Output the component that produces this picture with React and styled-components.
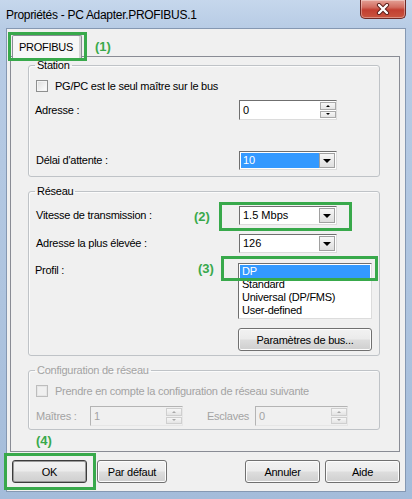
import React from 'react';
import styled, { createGlobalStyle } from 'styled-components';

// Global page setup
const GlobalStyle = createGlobalStyle`
  html, body { margin: 0; padding: 0; }
  body {
    background: #b9cce4;
    font-family: "Liberation Sans", Arial, sans-serif;
    font-size: 11px;
  }
  * { box-sizing: border-box; }
`;

const GREEN = '#38a94b';

// Window chrome
const Window = styled.div`
  position: relative;
  width: 412px;
  height: 499px;
  display: flex;
  flex-direction: column;
  overflow: hidden;
  background: linear-gradient(180deg, #c6d7ec 0px, #b8cce5 28px, #aec4df 300px, #a4bcda 100%);
`;

const TitleBar = styled.div`
  height: 28px;
  flex: none;
  display: flex;
  align-items: flex-start;
  padding: 0 6px 0 6px;
`;

const Title = styled.div`
  flex: 1;
  margin-top: 8px;
  font-size: 12px;
  line-height: 14px;
  letter-spacing: -0.3px;
  color: #000;
`;

const CloseButton = styled.div`
  width: 46px;
  height: 19px;
  display: flex;
  align-items: center;
  justify-content: center;
  border: 1px solid #6e2a26;
  border-top: none;
  border-radius: 0 0 5px 5px;
  background: linear-gradient(180deg, #e4a196 0%, #d26d60 40%, #c23f31 55%, #c9553f 100%);
  box-shadow: inset 0 0 0 1px rgba(255, 255, 255, 0.35);
`;

const Client = styled.div`
  flex: 1;
  margin: 0 6px 7px;
  border: 1px solid #8598b2;
  background: #f0f0f0;
  display: flex;
  flex-direction: column;
  padding: 6px 5px 0 3px;
`;

// Tabs
const TabStrip = styled.div`
  display: flex;
  height: 22px;
  padding-left: 2px;
  position: relative;
  z-index: 1;
  margin-bottom: -1px;
`;

const Tab = styled.div`
  width: 70px;
  height: 23px;
  border: 1px solid #898c95;
  border-bottom: none;
  border-radius: 2px 2px 0 0;
  background: #f7f7f7;
  box-shadow: inset -2px 0 0 #d4d4d4;
  display: flex;
  align-items: center;
  justify-content: center;
  padding-right: 2px;
  padding-bottom: 1px;
  color: #000;
  letter-spacing: -0.25px;
`;

const TabPanel = styled.div`
  border: 1px solid #898c95;
  background: #f0f0f0;
  padding: 2px 19px 21px 17px;
`;

// Group boxes
const Group = styled.fieldset`
  margin: ${p => p.$mt}px 0 0;
  padding: 0 6px ${p => p.$pb}px 6px;
  border: 1px solid #bfc3c7;
  border-radius: 3px;
  box-shadow: inset 1px 1px 0 #fbfbfb;
  min-width: 0;
  color: ${p => (p.$disabled ? '#a3a3a3' : '#000')};
`;

const Legend = styled.legend`
  padding: 0 2px;
  font-size: 11px;
  line-height: 13px;
  letter-spacing: -0.25px;
`;

const Row = styled.div`
  display: flex;
  align-items: ${p => (p.$top ? 'flex-start' : 'center')};
  height: ${p => p.$h}px;
  margin-top: ${p => p.$mt}px;
`;

const Label = styled.span`
  width: ${p => p.$w || 204}px;
  flex: none;
  padding-left: ${p => p.$indent || 0}px;
  padding-top: ${p => p.$pt || 0}px;
  line-height: 13px;
  letter-spacing: -0.25px;
  white-space: nowrap;
`;

const Check = styled.span`
  width: 12px;
  height: 12px;
  flex: none;
  margin: 0 7px 0 1px;
  border: 1px solid ${p => (p.$disabled ? '#bdbdbd' : '#8e8f8f')};
  background: ${p => (p.$disabled
    ? '#f0f0f0'
    : 'linear-gradient(135deg, #dcdcdc 0%, #f6f6f6 70%, #ffffff 100%)')};
  box-shadow: inset 0 0 0 1px ${p => (p.$disabled ? '#e6e6e6' : '#f4f4f4')};
`;

const CheckText = styled.span`
  line-height: 13px;
  letter-spacing: -0.25px;
  white-space: nowrap;
`;

// Text-like controls
const Spin = styled.div`
  width: ${p => p.$w}px;
  height: 20px;
  flex: none;
  display: flex;
  border: 1px solid;
  border-color: ${p => (p.$disabled ? '#b4b4b4 #e6e6e6 #e6e6e6 #b4b4b4' : '#6f6f6f #dcdcdc #dcdcdc #6f6f6f')};
  background: ${p => (p.$disabled ? '#f0f0f0' : '#fff')};
  padding: 1px 0 1px 1px;
`;

const SpinValue = styled.span`
  flex: 1;
  padding-left: 2px;
  line-height: 16px;
  color: ${p => (p.$disabled ? '#a3a3a3' : '#000')};
`;

const SpinButtons = styled.div`
  width: 16px;
  display: flex;
  flex-direction: column;
  gap: 1px;
`;

const SpinArrow = styled.div`
  flex: 1;
  display: flex;
  align-items: center;
  justify-content: center;
  border: 1px solid ${p => (p.$disabled ? '#cfcfcf' : '#a9a9a9')};
  background: linear-gradient(180deg, #f7f7f7, #e4e4e4);
  &::after {
    content: '';
    border-left: 2px solid transparent;
    border-right: 2px solid transparent;
    ${p => (p.$down ? 'border-top' : 'border-bottom')}: 2px solid ${p => (p.$disabled ? '#a8a8a8' : '#000')};
  }
`;

const Combo = styled.div`
  width: 98px;
  height: 19px;
  flex: none;
  display: flex;
  border: 1px solid;
  border-color: #6f6f6f #dcdcdc #dcdcdc #6f6f6f;
  background: #fff;
  padding: 1px;
`;

const ComboValue = styled.span`
  flex: 1;
  padding-left: 2px;
  line-height: 15px;
  background: ${p => (p.$selected ? '#3399ff' : 'transparent')};
  color: ${p => (p.$selected ? '#fff' : '#000')};
`;

const ComboButton = styled.div`
  width: 16px;
  display: flex;
  align-items: center;
  justify-content: center;
  border: 1px solid #a0a0a0;
  background: linear-gradient(180deg, #f7f7f7, #dedede);
  &::after {
    content: '';
    border-left: 4px solid transparent;
    border-right: 4px solid transparent;
    border-top: 4px solid #000;
    margin-top: 1px;
  }
`;

const ListBox = styled.div`
  width: 134px;
  height: 56px;
  flex: none;
  margin-left: -1px;
  border: 1px solid;
  border-color: #6f6f6f #dcdcdc #dcdcdc #6f6f6f;
  background: #fff;
  padding: 1px 1px 0;
`;

const ListItem = styled.div`
  height: 13px;
  line-height: 13px;
  padding-left: 2px;
  letter-spacing: -0.25px;
  background: ${p => (p.$selected ? '#3399ff' : 'transparent')};
  color: ${p => (p.$selected ? '#fff' : '#000')};
`;

// Push buttons
const Button = styled.div`
  width: ${p => p.$w}px;
  height: 23px;
  flex: none;
  margin-left: ${p => p.$ml || 0}px;
  display: flex;
  align-items: center;
  justify-content: center;
  border: 1px solid ${p => (p.$default ? '#3c3c3c' : '#707070')};
  border-radius: 3px;
  background: linear-gradient(180deg, #f2f2f2 0%, #ebebeb 48%, #dddddd 52%, #cfcfcf 100%);
  box-shadow: inset 0 0 0 1px ${p => (p.$default ? '#9a9a9a' : '#fcfcfc')};
  color: #000;
  letter-spacing: -0.25px;
`;

const ButtonRow = styled.div`
  display: flex;
  margin-top: 8px;
  padding-left: 2px;
`;

const Spacer = styled.div`
  flex: 1;
`;

// Annotation overlays
const Marker = styled.div`
  position: absolute;
  left: ${p => p.$x}px;
  top: ${p => p.$y}px;
  width: ${p => p.$w}px;
  height: ${p => p.$h}px;
  border: 3px solid ${GREEN};
  pointer-events: none;
`;

const MarkerText = styled.div`
  position: absolute;
  left: ${p => p.$x}px;
  top: ${p => p.$y}px;
  font-size: 13px;
  line-height: 15px;
  font-weight: bold;
  color: ${GREEN};
`;

const SpinBox = ({ value, width, disabled }) => (
  <Spin $w={width} $disabled={disabled}>
    <SpinValue $disabled={disabled}>{value}</SpinValue>
    <SpinButtons>
      <SpinArrow $disabled={disabled} />
      <SpinArrow $down $disabled={disabled} />
    </SpinButtons>
  </Spin>
);

const ComboBox = ({ value, selected }) => (
  <Combo>
    <ComboValue $selected={selected}>{value}</ComboValue>
    <ComboButton />
  </Combo>
);

const profiles = ['DP', 'Standard', 'Universal (DP/FMS)', 'User-defined'];

const App = () => {
  return (
    <Window>
      <GlobalStyle />
      <TitleBar>
        <Title>Propriétés - PC Adapter.PROFIBUS.1</Title>
        <CloseButton>
          <svg width="14" height="12" viewBox="0 0 14 12">
            <path d="M3 2 L11 10 M11 2 L3 10" stroke="#5a1c18" strokeWidth="4.2" strokeLinecap="round" />
            <path d="M3 2 L11 10 M11 2 L3 10" stroke="#ffffff" strokeWidth="2.4" strokeLinecap="round" />
          </svg>
        </CloseButton>
      </TitleBar>

      <Client>
        <TabStrip>
          <Tab>PROFIBUS</Tab>
        </TabStrip>
        <TabPanel>
          <Group $mt={0} $pb={6}>
            <Legend>Station</Legend>
            <Row $h={14} $mt={7}>
              <Check />
              <CheckText>PG/PC est le seul maître sur le bus</CheckText>
            </Row>
            <Row $h={20} $mt={7}>
              <Label>Adresse :</Label>
              <SpinBox value="0" width={98} />
            </Row>
            <Row $h={19} $mt={31}>
              <Label $indent={1}>Délai d'attente :</Label>
              <ComboBox value="10" selected />
            </Row>
          </Group>

          <Group $mt={8} $pb={4}>
            <Legend>Réseau</Legend>
            <Row $h={19} $mt={8}>
              <Label $indent={1}>Vitesse de transmission :</Label>
              <ComboBox value="1.5 Mbps" />
            </Row>
            <Row $h={19} $mt={9}>
              <Label $indent={1}>Adresse la plus élevée :</Label>
              <ComboBox value="126" />
            </Row>
            <Row $h={56} $mt={10} $top>
              <Label $pt={1}>Profil :</Label>
              <ListBox>
                {profiles.map((name, index) => (
                  <ListItem key={index} $selected={index === 0}>{name}</ListItem>
                ))}
              </ListBox>
            </Row>
            <Row $h={23} $mt={9}>
              <Label $w={203} />
              <Button $w={134}>Paramètres de bus...</Button>
            </Row>
          </Group>

          <Group $mt={8} $pb={3} $disabled>
            <Legend>Configuration de réseau</Legend>
            <Row $h={14} $mt={7}>
              <Check $disabled />
              <CheckText>Prendre en compte la configuration de réseau suivante</CheckText>
            </Row>
            <Row $h={20} $mt={8}>
              <Label $w={55} $indent={1}>Maîtres :</Label>
              <SpinBox value="1" width={93} disabled />
              <Label $w={72} $indent={24}>Esclaves</Label>
              <SpinBox value="0" width={93} disabled />
            </Row>
          </Group>
        </TabPanel>

        <ButtonRow>
          <Button $w={75} $default>OK</Button>
          <Button $w={70} $ml={10}>Par défaut</Button>
          <Spacer />
          <Button $w={75}>Annuler</Button>
          <Button $w={75} $ml={5}>Aide</Button>
        </ButtonRow>
      </Client>

      <Marker $x={8} $y={32} $w={79} $h={29} />
      <MarkerText $x={95} $y={39}>(1)</MarkerText>
      <Marker $x={219} $y={202} $w={133} $h={29} />
      <MarkerText $x={194} $y={209}>(2)</MarkerText>
      <Marker $x={221} $y={256} $w={157} $h={25} />
      <MarkerText $x={198} $y={261}>(3)</MarkerText>
      <Marker $x={4} $y={453} $w={92} $h={37} />
      <MarkerText $x={36} $y={433}>(4)</MarkerText>
    </Window>
  );
};

export default App;
